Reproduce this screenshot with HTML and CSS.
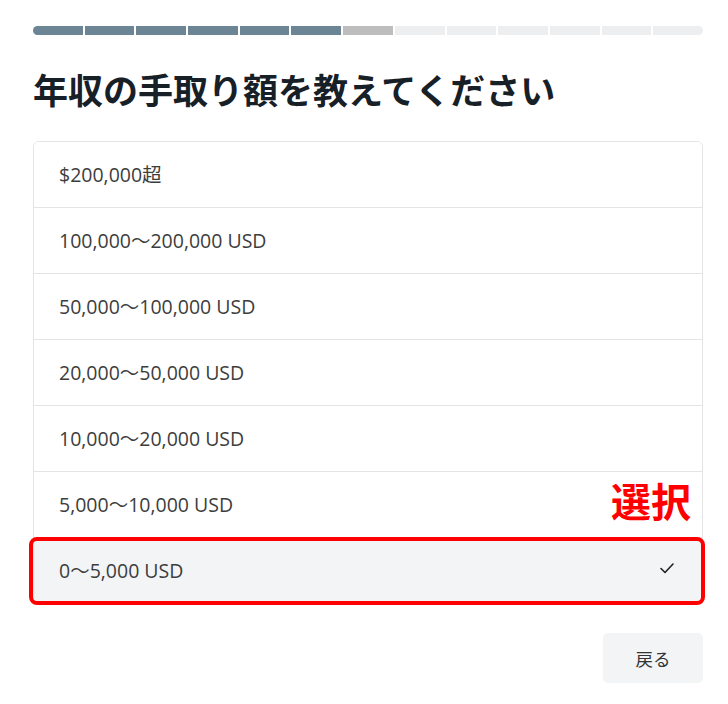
FILE: index.html
```html
<!DOCTYPE html>
<html lang="ja">
<head>
<meta charset="utf-8">
<title>年収の手取り額</title>
<link rel="stylesheet" href="styles.css">
</head>
<body>
<div class="page">
  <div class="progress">
    <span class="seg done"></span>
    <span class="seg done"></span>
    <span class="seg done"></span>
    <span class="seg done"></span>
    <span class="seg done"></span>
    <span class="seg done"></span>
    <span class="seg current"></span>
    <span class="seg"></span>
    <span class="seg"></span>
    <span class="seg"></span>
    <span class="seg"></span>
    <span class="seg"></span>
    <span class="seg"></span>
  </div>
  <h1 class="title">年収の手取り額を教えてください</h1>
  <div class="list-wrap">
    <ul class="options">
      <li class="option">$200,000超</li>
      <li class="option">100,000〜200,000 USD</li>
      <li class="option">50,000〜100,000 USD</li>
      <li class="option">20,000〜50,000 USD</li>
      <li class="option">10,000〜20,000 USD</li>
      <li class="option">5,000〜10,000 USD</li>
      <li class="option selected">
        <span>0〜5,000 USD</span>
        <svg class="check" width="14" height="11" viewBox="0 0 14 11" aria-hidden="true">
          <polyline points="1,5.5 5,9.5 13,1" fill="none" stroke="#222" stroke-width="1.6" stroke-linecap="round" stroke-linejoin="round"/>
        </svg>
      </li>
    </ul>
    <div class="mark-box"></div>
    <div class="mark-label">選択</div>
  </div>
  <div class="actions">
    <button class="back">戻る</button>
  </div>
</div>
</body>
</html>
```
FILE: styles.css
```css
* { box-sizing: border-box; }
html, body { margin: 0; padding: 0; background: #fff; }
body {
  font-family: "Open Sans", "Noto Sans", "Noto Sans CJK JP", sans-serif;
  color: #3d3d3d;
}
.page {
  width: 670px;
  margin-left: 33px;
  padding-top: 26px;
}
.progress {
  display: flex;
  gap: 2px;
  height: 9px;
  border-radius: 5px;
  overflow: hidden;
}
.seg { flex: 1; background: #edeef0; }
.seg.done { background: #6b8594; }
.seg.current { background: #bdbdbe; }
.title {
  margin: 28px 0 26px;
  font-family: "Noto Sans CJK JP", sans-serif;
  font-weight: 700;
  font-size: 35px;
  line-height: 52px;
  color: #172026;
  letter-spacing: 0;
}
.list-wrap { position: relative; }
.options {
  list-style: none;
  margin: 0;
  padding: 0;
  border: 1px solid #e4e4e4;
  border-radius: 6px;
  overflow: hidden;
}
.option {
  display: flex;
  align-items: center;
  justify-content: space-between;
  height: 66px;
  padding: 0 28px 2px 25px;
  font-size: 19.5px;
  border-bottom: 1px solid #e4e4e4;
  background: #fff;
}
.option:last-child { border-bottom: none; height: 65px; }
.option.selected { background: #f3f4f6; }
.check { display: block; margin-top: -2px; }
.mark-box {
  position: absolute;
  left: -4px;
  top: 396px;
  width: 676px;
  height: 68px;
  border: 4px solid #ff0000;
  border-radius: 8px;
  pointer-events: none;
}
.mark-label {
  position: absolute;
  left: 578px;
  top: 339px;
  width: 80px;
  font-family: "Noto Sans CJK JP", sans-serif;
  font-weight: 700;
  font-size: 40px;
  line-height: 40px;
  color: #ff0000;
}
.actions {
  display: flex;
  justify-content: flex-end;
  margin-top: 29px;
}
.back {
  width: 100px;
  height: 50px;
  border: none;
  border-radius: 5px;
  background: #f3f4f6;
  font-family: "Noto Sans CJK JP", sans-serif;
  font-size: 17.5px;
  color: #333;
  padding: 0;
}
```
